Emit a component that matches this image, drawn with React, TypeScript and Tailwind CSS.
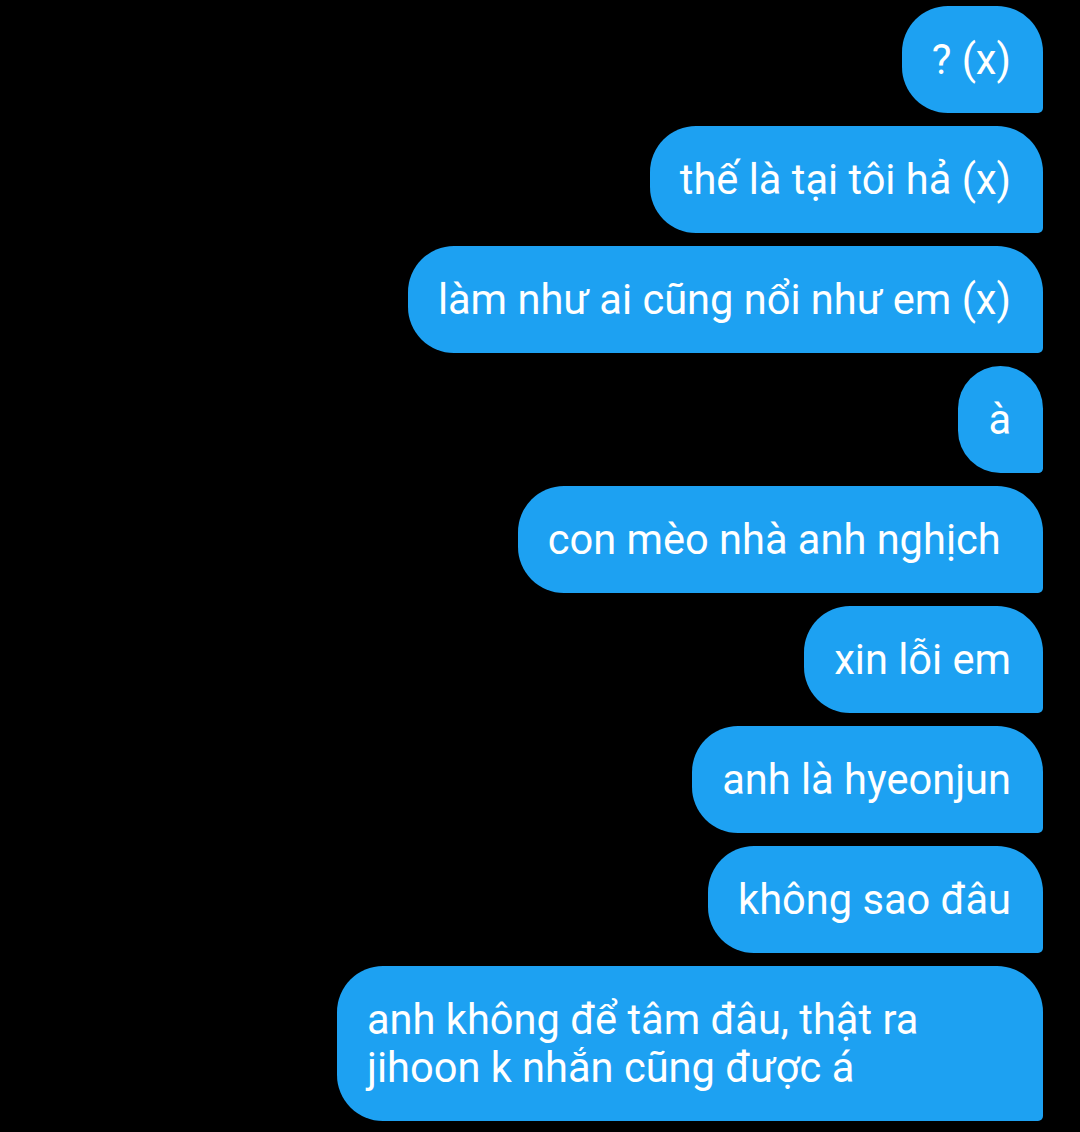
const messages = [
  "? (x)",
  "thế là tại tôi hả (x)",
  "làm như ai cũng nổi như em (x)",
  "à",
  "con mèo nhà anh nghịch\u00a0",
  "xin lỗi em",
  "anh là hyeonjun",
  "không sao đâu",
  "anh không để tâm đâu, thật ra\njihoon k nhắn cũng được á",
];

export default function App() {
  return (
    <div className="min-h-[1132px] w-[1080px] bg-black pt-[6px] pr-[37px] flex flex-col items-end gap-[13px] font-['Roboto',sans-serif]">
      {messages.map((m, i) => (
        <div
          key={i}
          className={
            "whitespace-pre-line bg-[#1da1f2] text-white text-[41.6px] leading-[48px] pl-[30px] pr-[32px] pt-[30px] pb-[29px] rounded-[46px] rounded-br-[5px] " +
            (m.includes("\n") ? "w-[706px]" : "max-w-[706px]")
          }
        >
          {m}
        </div>
      ))}
    </div>
  );
}
